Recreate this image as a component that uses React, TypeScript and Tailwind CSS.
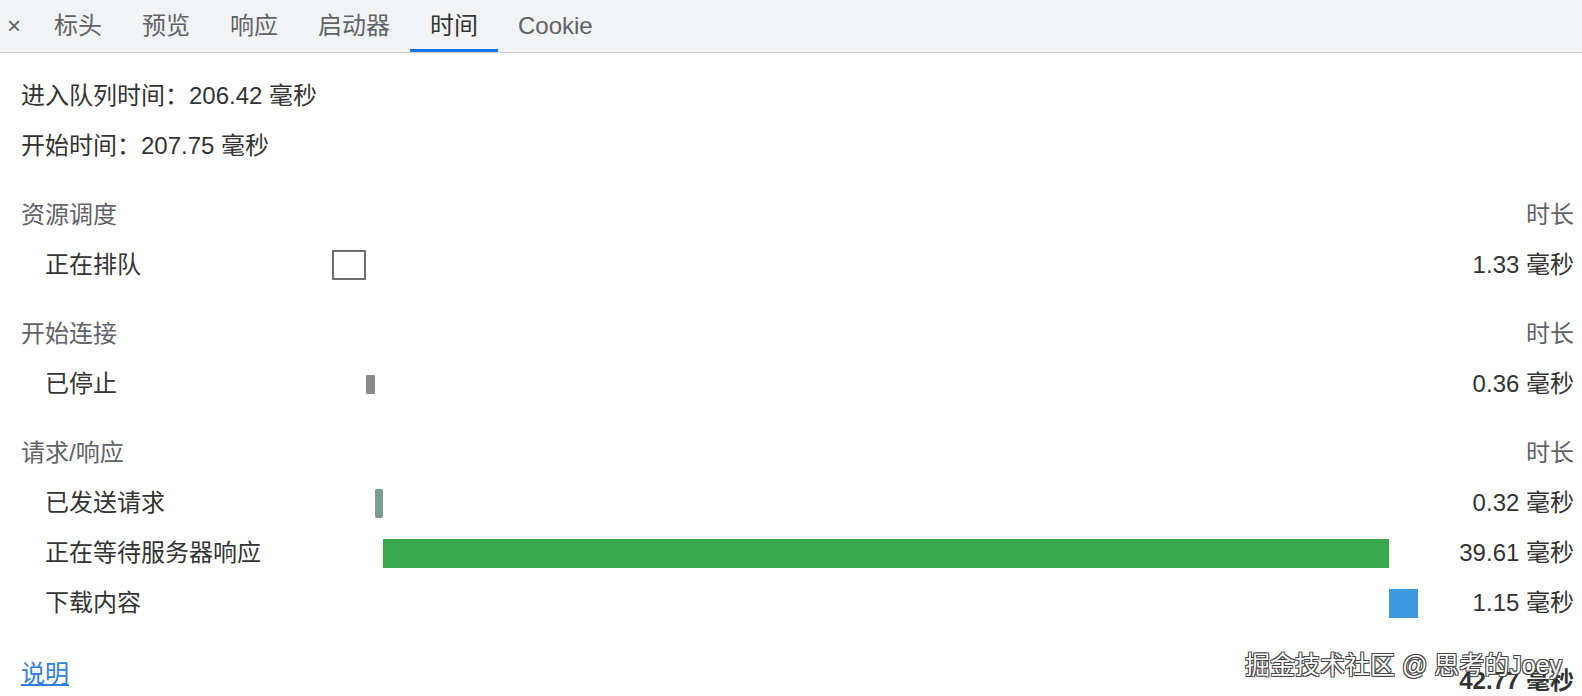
import React from "react";

const FONT = "font-['Liberation_Sans','Noto_Sans_CJK_SC',sans-serif]";

const TOTAL = 42.77;
const TRACK = 1086;

type Phase = {
  label: string;
  start: number;
  dur: number;
  bar: string;
};

type Section = {
  title: string;
  phases: Phase[];
};

const sections: Section[] = [
  {
    title: "资源调度",
    phases: [
      {
        label: "正在排队",
        start: 0,
        dur: 1.33,
        bar: "h-[30px] border-2 border-[#6f6f6f] bg-white",
      },
    ],
  },
  {
    title: "开始连接",
    phases: [
      { label: "已停止", start: 1.33, dur: 0.36, bar: "h-[19px] bg-[#8a8a8a] rounded-[1px]" },
    ],
  },
  {
    title: "请求/响应",
    phases: [
      { label: "已发送请求", start: 1.69, dur: 0.32, bar: "h-[29px] bg-[#7a9d93] rounded-[2px]" },
      { label: "正在等待服务器响应", start: 2.01, dur: 39.61, bar: "h-[29px] bg-[#39a74b]" },
      { label: "下载内容", start: 41.62, dur: 1.15, bar: "h-[29px] bg-[#3b98dd]" },
    ],
  },
];

const tabs = ["标头", "预览", "响应", "启动器", "时间", "Cookie"];

function px(ms: number) {
  return Math.round((ms / TOTAL) * TRACK);
}

function TabBar() {
  return (
    <div className="flex h-[53px] items-stretch border-b border-[#cdcfd3] bg-[#f1f3f4]">
      <div className="flex w-[34px] items-center pl-[7px] text-[24px] text-[#5f6368]">×</div>
      {tabs.map((t) => (
        <div
          key={t}
          className={
            t === "时间"
              ? "flex items-center border-b-[3px] border-[#1a73e8] px-[20px] pt-[3px] text-[24px] text-[#333]"
              : "flex items-center px-[20px] text-[24px] text-[#5f6368]"
          }
        >
          {t}
        </div>
      ))}
    </div>
  );
}

function PhaseRow({ phase }: { phase: Phase }) {
  return (
    <div className="flex h-[50px] items-center">
      <div className="w-[311px] pl-[24px] text-[#333]">{phase.label}</div>
      <div className="flex w-[1086px] items-center">
        <div
          className={phase.bar}
          style={{ marginLeft: px(phase.start), width: Math.max(px(phase.dur), 8) }}
        />
      </div>
      <div className="flex-1 text-right text-[#333]">{phase.dur.toFixed(2)} 毫秒</div>
    </div>
  );
}

export default function App() {
  return (
    <div className={`relative h-[696px] w-[1582px] overflow-hidden bg-white ${FONT}`}>
      <TabBar />
      <div className="pl-[21px] pr-[8px] pt-[18px] text-[24px]">
        <div className="flex h-[50px] items-center text-[#333]">进入队列时间：206.42 毫秒</div>
        <div className="flex h-[50px] items-center text-[#333]">开始时间：207.75 毫秒</div>
        {sections.map((s) => (
          <div key={s.title} className="mt-[19px]">
            <div className="flex h-[50px] items-center justify-between text-[#5f6368]">
              <span>{s.title}</span>
              <span>时长</span>
            </div>
            {s.phases.map((p) => (
              <PhaseRow key={p.label} phase={p} />
            ))}
          </div>
        ))}
        <div className="mt-[21px] flex h-[50px] items-center justify-between">
          <a className="text-[#2f7de1] underline" href="#">
            说明
          </a>
          <span className="pt-[14px] font-bold text-[#333]">42.77 毫秒</span>
        </div>
      </div>
      <div className="absolute left-[1245px] top-[647px] text-[25px] text-white [text-shadow:1px_1px_0_#444,-1px_-1px_0_#444,1px_-1px_0_#444,-1px_1px_0_#444]">
        掘金技术社区 @ 思考的Joey
      </div>
    </div>
  );
}
